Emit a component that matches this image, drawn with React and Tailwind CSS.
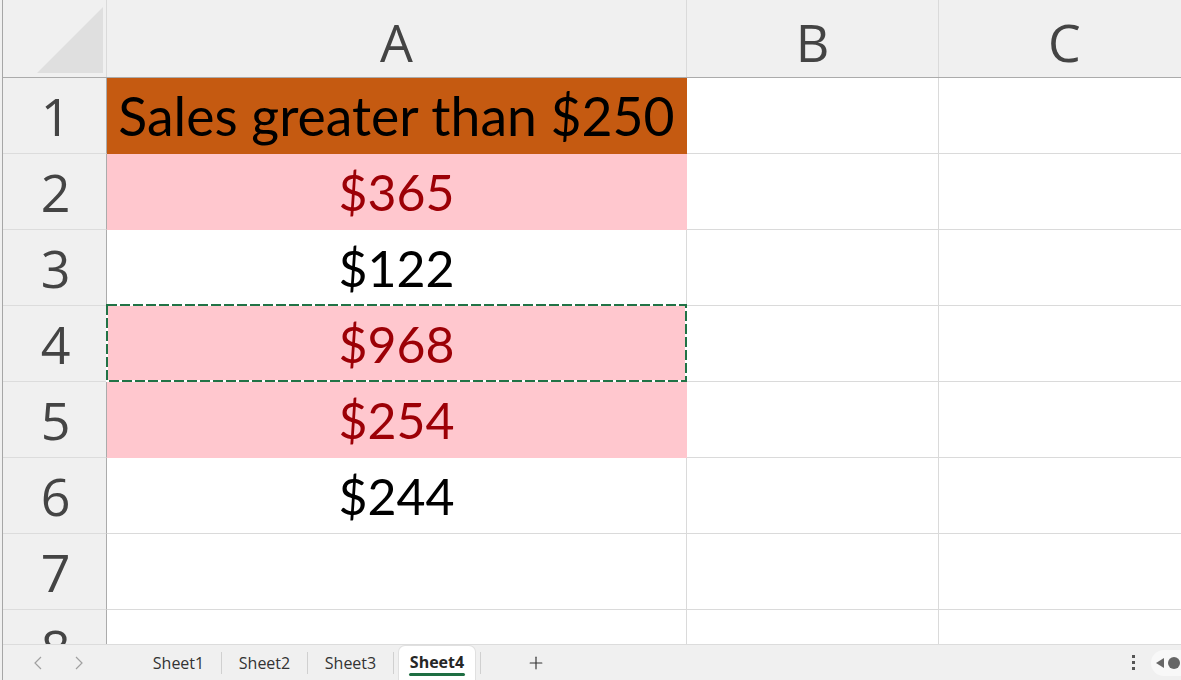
import { Plus } from "lucide-react";

const rows = [
  { n: 1, text: "Sales greater than $250", kind: "head" },
  { n: 2, text: "$365", kind: "bad" },
  { n: 3, text: "$122", kind: "plain" },
  { n: 4, text: "$968", kind: "bad", selected: true },
  { n: 5, text: "$254", kind: "bad" },
  { n: 6, text: "$244", kind: "plain" },
  { n: 7, text: "", kind: "plain" },
  { n: 8, text: "", kind: "plain" },
];

const uiFont = { fontFamily: '"Open Sans", "Noto Sans", sans-serif' };
const cellFont = { fontFamily: 'Lato, "Noto Sans", sans-serif' };

function CellA({ row }) {
  if (row.kind === "head") {
    return (
      <div className="relative flex h-[76px] items-center justify-center border-r border-b border-[#c55a11] bg-[#c55a11] text-[53.5px] leading-none text-black" style={cellFont}>
        {row.text}
      </div>
    );
  }
  if (row.kind === "bad") {
    return (
      <div className="relative flex h-[76px] items-center justify-center border-r border-b border-[#ffc7ce] bg-[#ffc7ce] text-[50px] leading-none text-[#9c0006]" style={cellFont}>
        {row.text}
        {row.selected && (
          <svg className="pointer-events-none absolute -top-[2px] -left-[1px] h-[79px] w-[582px]" viewBox="0 0 582 79">
            <rect x="1" y="1" width="579" height="76" fill="none" stroke="#ffffff" strokeWidth="2" />
            <rect x="1" y="1" width="579" height="76" fill="none" stroke="#217346" strokeWidth="2" strokeDasharray="10 3" />
          </svg>
        )}
      </div>
    );
  }
  return (
    <div className="flex h-[76px] items-center justify-center border-r border-b border-[#dadada] bg-white text-[50px] leading-none text-black" style={cellFont}>
      {row.text}
    </div>
  );
}

function SheetTab({ name, active }) {
  if (active) {
    return (
      <div className="relative mx-[5px] mt-[1px] flex h-[34px] w-[76px] flex-col items-center justify-center rounded-t-[6px] bg-white shadow-[0_0_0_1px_#e0e0e0]">
        <span className="mt-[-2px] text-[16px] font-bold text-[#262626]" style={uiFont}>{name}</span>
        <div className="absolute bottom-[4px] left-[10px] right-[10px] h-[3px] rounded-full bg-[#1e6e42]" />
      </div>
    );
  }
  return (
    <div className="flex h-[34px] w-[85px] items-center justify-center text-[16px] text-[#333]" style={uiFont}>
      {name}
    </div>
  );
}

function Sep() {
  return <div className="h-[22px] w-px bg-[#d0d0d0]" />;
}

export default function App() {
  return (
    <div className="flex h-[680px] w-[1181px] flex-col overflow-hidden bg-[#f0f0f0] pl-[2px]">
      <div className="flex flex-1 flex-col overflow-hidden border-l border-[#a6a6a6]">
        {/* column headers */}
        <div className="grid h-[78px] shrink-0 grid-cols-[104px_580px_252px_252px] border-b border-[#ababab] bg-[#f0f0f0]">
          <div className="relative border-r border-[#dadada]">
            <svg className="absolute top-[7px] left-[34px]" width="67" height="67" viewBox="0 0 67 67">
              <polygon points="0,66 66,66 66,0" fill="#dfdfdf" />
            </svg>
          </div>
          {["A", "B", "C"].map((c) => (
            <div key={c} className="flex items-center justify-center border-r border-[#dadada] pt-[6px] text-[52px] leading-none text-[#444]" style={uiFont}>
              {c}
            </div>
          ))}
        </div>
        {/* rows */}
        <div className="flex-1 overflow-hidden">
          {rows.map((row) => (
            <div key={row.n} className="grid grid-cols-[104px_580px_252px_252px]">
              <div className="flex h-[76px] items-center justify-center border-r border-b border-r-[#ababab] border-b-[#dcdcdc] bg-[#f0f0f0] pl-[2px] text-[52px] leading-none text-[#444]" style={uiFont}>
                {row.n}
              </div>
              <CellA row={row} />
              <div className="h-[76px] border-r border-b border-[#dadada] bg-white" />
              <div className="h-[76px] border-r border-b border-[#dadada] bg-white" />
            </div>
          ))}
        </div>
        {/* sheet tabs */}
        <div className="flex h-[36px] shrink-0 items-center border-t border-[#dcdcdc] bg-[#f0f0f0]">
          <div className="flex w-[108px] items-center gap-[31px] pl-[30px] text-[#a0a0a0]">
            <svg width="10" height="16" viewBox="0 0 10 16"><path d="M8 2 L2 8 L8 14" fill="none" stroke="currentColor" strokeWidth="1.2" /></svg>
            <svg width="10" height="16" viewBox="0 0 10 16"><path d="M2 2 L8 8 L2 14" fill="none" stroke="currentColor" strokeWidth="1.2" /></svg>
          </div>
          <div className="flex items-center pl-[25px]">
            <SheetTab name="Sheet1" />
            <Sep />
            <SheetTab name="Sheet2" />
            <Sep />
            <SheetTab name="Sheet3" />
            <Sep />
            <SheetTab name="Sheet4" active />
            <Sep />
            <div className="flex w-[110px] items-center justify-center text-[#333]">
              <Plus size={20} strokeWidth={1.4} />
            </div>
          </div>
          <div className="ml-auto flex items-center">
            <div className="mr-[16px] flex flex-col gap-[3px]">
              <div className="h-[3px] w-[3px] bg-[#555]" />
              <div className="h-[3px] w-[3px] bg-[#555]" />
              <div className="h-[3px] w-[3px] bg-[#555]" />
            </div>
            <div className="flex h-[26px] w-[30px] items-center gap-[4px] rounded-l-full bg-[#f8f8f8] pl-[5px]">
              <svg width="8" height="10" viewBox="0 0 8 10"><polygon points="8,0 8,10 0,5" fill="#666" /></svg>
              <div className="h-[12px] w-[12px] shrink-0 rounded-full bg-[#666]" />
            </div>
          </div>
        </div>
      </div>
    </div>
  );
}
